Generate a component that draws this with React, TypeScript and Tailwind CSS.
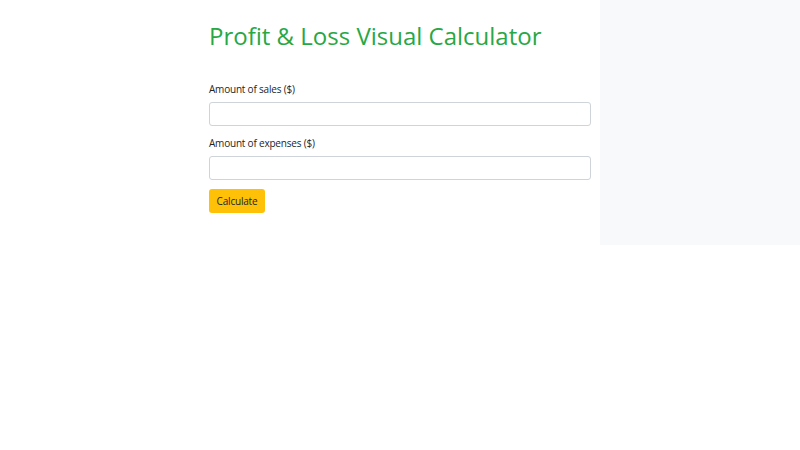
export default function App() {
  return (
    <div className="flex w-[800px] items-start font-['Open_Sans',sans-serif] text-[#212529]">
      <div className="w-[600px] pl-[209px] pr-[9px]">
        <h1 className="mt-[19px] text-[24px] leading-[34px] text-[#28a745]">
          Profit &amp; Loss Visual Calculator
        </h1>
        <form className="mt-[28px]" onSubmit={(e) => e.preventDefault()}>
          <label className="mb-[5px] block text-[10px] leading-[16px] tracking-[-0.2px]">Amount of sales ($)</label>
          <input
            type="text"
            className="block h-[24px] w-full rounded-[3px] border border-[#ced4da] bg-white px-2 text-[10px] outline-none"
          />
          <label className="mt-[9px] mb-[5px] block text-[10px] leading-[16px] tracking-[-0.2px]">Amount of expenses ($)</label>
          <input
            type="text"
            className="block h-[24px] w-full rounded-[3px] border border-[#ced4da] bg-white px-2 text-[10px] outline-none"
          />
          <button
            type="submit"
            className="mt-[9px] flex h-[24px] w-[56px] items-center justify-center rounded-[3px] bg-[#ffc107] text-[10px] tracking-[-0.2px]"
          >
            Calculate
          </button>
        </form>
      </div>
      <div className="h-[245px] w-[200px] bg-[#f8f9fa]" />
    </div>
  );
}
